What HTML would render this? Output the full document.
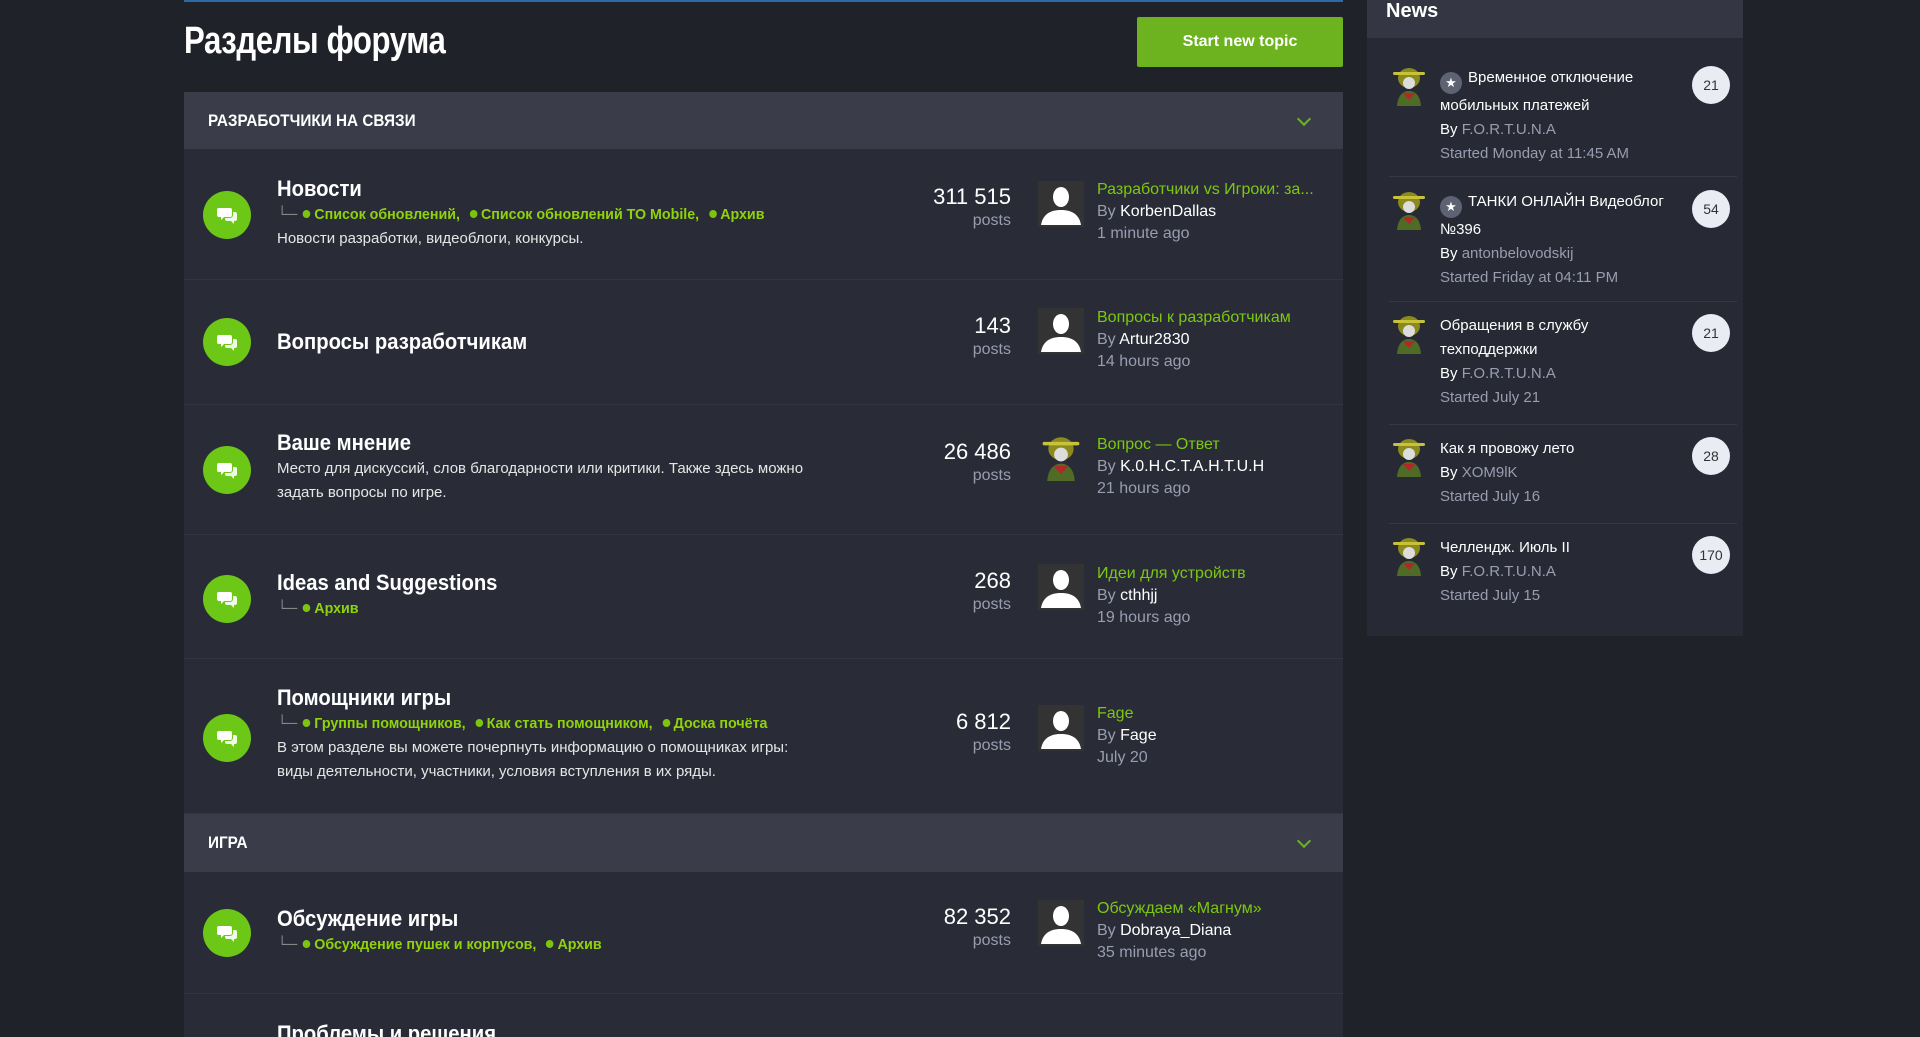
<!DOCTYPE html>
<html style="width:1920px;height:1037px;overflow:hidden"><head><meta charset="utf-8"><style>
*{box-sizing:border-box;margin:0;padding:0}
body{width:1920px;height:1037px;overflow:hidden;background:#1f2229;font-family:"Liberation Sans",sans-serif;color:#fff;position:relative}
.topline{position:absolute;left:184px;top:0;width:1159px;height:2px;background:#2b6aa6}
h1{position:absolute;left:184px;top:20px;font-size:38px;font-weight:bold;transform:scaleX(.82);transform-origin:left;letter-spacing:-.5px}
.btn{position:absolute;left:1137px;top:17px;width:206px;height:50px;background:#6cb31f;border-radius:2px;color:#fff;font-size:16px;display:flex;align-items:center;justify-content:center;font-weight:bold}
.main{position:absolute;left:184px;top:92px;width:1159px;height:945px;background:#292c37;overflow:hidden}
.sh{height:57px;background:#3a3d49;display:flex;align-items:center;padding-left:24px;font-weight:bold;font-size:17px;position:relative}
.sh span{display:inline-block;transform:scaleX(.9);transform-origin:left}
.sh i{position:absolute;right:34px;top:22px;width:10px;height:10px;border-right:2.5px solid #6cb31f;border-bottom:2.5px solid #6cb31f;transform:rotate(45deg)}
.row{position:relative;border-bottom:1px solid #33363f}
.ic{position:absolute;left:19px;width:48px;height:48px;border-radius:50%;background:#6cc716;display:flex;align-items:center;justify-content:center}
.info{position:absolute;left:93px;width:570px}
.t{font-size:22px;color:#fff;line-height:28px;font-weight:bold;transform:scaleX(.92);transform-origin:left;white-space:nowrap}
.sub{font-size:15px;color:#8fd30a;font-weight:bold;line-height:24px;transform:scaleX(.95);transform-origin:left;white-space:nowrap}
.sub b{display:inline-block;width:8px;height:8px;border-radius:50%;background:#7cc40f;margin:0 4px 1px 6px}
.sub em{color:#888;font-style:normal;font-weight:normal}
.d{font-size:15px;color:#e6e6e6;line-height:24px}
.st{position:absolute;right:332px;text-align:right}
.st .n{font-size:22px;line-height:26px}
.st .p{font-size:16px;color:#9a9cb0;line-height:22px}
.av{position:absolute;left:854px;width:46px;height:46px;background:#333}
.lp{position:absolute;left:913px;font-size:16px;line-height:22px;color:#9a9cb0;white-space:nowrap}
.lp a{color:#7cc80f;text-decoration:none}
.lp u{text-decoration:none;color:#fff}
.side{position:absolute;left:1367px;top:0;width:376px;height:636px;background:#272a34}
.side .hd{height:38px;background:#343743;padding-left:19px;font-weight:bold;font-size:20px;line-height:22px}
.it{position:absolute;left:0;width:376px}
.it .tx{position:absolute;left:73px;width:240px;font-size:15px;line-height:24px}
.it .tx .by{color:#fff}.it .tx .by span{color:#9a9cb0}
.it .tx .s{color:#9a9cb0}
.bd{position:absolute;left:325px;width:38px;height:38px;border-radius:50%;background:#e9ecf3;color:#333;font-size:14px;display:flex;align-items:center;justify-content:center}
.sep{position:absolute;left:22px;width:348px;height:1px;background:#363945}
.star{display:inline-block;width:22px;height:22px;border-radius:50%;background:#5d6372;vertical-align:-5px;margin-right:6px;text-align:center;font-size:13px;line-height:22px;color:#fff}
.tank{position:absolute;left:24px;width:36px;height:40px}
</style></head><body>
<svg width="0" height="0" style="position:absolute"><defs>
<g id="chat"><path d="M2 3h11a2 2 0 0 1 2 2v5a2 2 0 0 1-2 2H7l-3 3v-3H2a2 2 0 0 1-2-2V5a2 2 0 0 1 2-2z" fill="#fff"/><path d="M16 7h2a2 2 0 0 1 2 2v5a2 2 0 0 1-2 2h-1v3l-3-3h-4a2 2 0 0 1-2-2v-1h5a3 3 0 0 0 3-3z" fill="#fff" opacity=".9"/></g>
<g id="person"><rect width="46" height="46" fill="#333"/><ellipse cx="23" cy="16" rx="8" ry="10" fill="#fff"/><path d="M3 44 C5 32 14 29 23 29 C32 29 41 32 43 44Z" fill="#fff"/></g>
<g id="tk"><ellipse cx="18" cy="12" rx="11" ry="10" fill="#8a8a1e"/><rect x="2" y="6" width="32" height="3" rx="1.5" fill="#c8c23a"/><ellipse cx="18" cy="17" rx="6" ry="6" fill="#ddd"/><path d="M6 40 C7 28 13 25 18 25 C23 25 29 28 30 40Z" fill="#4f6b26"/><path d="M12 27 L18 34 L24 27Z" fill="#b3262a"/></g>
</defs></svg>
<div class="topline"></div>
<h1>Разделы форума</h1>
<div class="btn">Start new topic</div>
<div class="main">
<div class="sh"><span>РАЗРАБОТЧИКИ НА СВЯЗИ</span><i></i></div>
<div class="row" style="height:131px">
 <div class="ic" style="top:42px"><svg width="22" height="20" viewBox="0 0 20 20"><use href="#chat"/></svg></div>
 <div class="info" style="top:26px"><div class="t">Новости</div><div class="sub"><em>└─</em><b></b>Список обновлений, <b></b>Список обновлений ТО Mobile, <b></b>Архив</div><div class="d">Новости разработки, видеоблоги, конкурсы.</div></div>
 <div class="st" style="top:35px"><div class="n">311 515</div><div class="p">posts</div></div>
 <svg class="av" style="top:32px" viewBox="0 0 46 46"><use href="#person"/></svg>
 <div class="lp" style="top:30px"><a>Разработчики vs Игроки: за...</a><br>By <u>KorbenDallas</u><br>1 minute ago</div>
</div>
<div class="row" style="height:125px">
 <div class="ic" style="top:38px"><svg width="22" height="20" viewBox="0 0 20 20"><use href="#chat"/></svg></div>
 <div class="info" style="top:48px"><div class="t">Вопросы разработчикам</div></div>
 <div class="st" style="top:33px"><div class="n">143</div><div class="p">posts</div></div>
 <svg class="av" style="top:28px" viewBox="0 0 46 46"><use href="#person"/></svg>
 <div class="lp" style="top:27px"><a>Вопросы к разработчикам</a><br>By <u>Artur2830</u><br>14 hours ago</div>
</div>
<div class="row" style="height:130px">
 <div class="ic" style="top:41px"><svg width="22" height="20" viewBox="0 0 20 20"><use href="#chat"/></svg></div>
 <div class="info" style="top:24px"><div class="t">Ваше мнение</div><div class="d">Место для дискуссий, слов благодарности или критики. Также здесь можно задать вопросы по игре.</div></div>
 <div class="st" style="top:34px"><div class="n">26 486</div><div class="p">posts</div></div>
 <svg class="av" style="top:30px;background:none" viewBox="0 0 36 40"><use href="#tk"/></svg>
 <div class="lp" style="top:29px"><a>Вопрос — Ответ</a><br>By <u>K.0.H.C.T.A.H.T.U.H</u><br>21 hours ago</div>
</div>
<div class="row" style="height:124px">
 <div class="ic" style="top:40px"><svg width="22" height="20" viewBox="0 0 20 20"><use href="#chat"/></svg></div>
 <div class="info" style="top:34px"><div class="t">Ideas and Suggestions</div><div class="sub"><em>└─</em><b></b>Архив</div></div>
 <div class="st" style="top:33px"><div class="n">268</div><div class="p">posts</div></div>
 <svg class="av" style="top:29px" viewBox="0 0 46 46"><use href="#person"/></svg>
 <div class="lp" style="top:28px"><a>Идеи для устройств</a><br>By <u>cthhjj</u><br>19 hours ago</div>
</div>
<div class="row" style="height:155px">
 <div class="ic" style="top:55px"><svg width="22" height="20" viewBox="0 0 20 20"><use href="#chat"/></svg></div>
 <div class="info" style="top:25px"><div class="t">Помощники игры</div><div class="sub"><em>└─</em><b></b>Группы помощников, <b></b>Как стать помощником, <b></b>Доска почёта</div><div class="d" style="width:540px">В этом разделе вы можете почерпнуть информацию о помощниках игры: виды деятельности, участники, условия вступления в их ряды.</div></div>
 <div class="st" style="top:50px"><div class="n">6 812</div><div class="p">posts</div></div>
 <svg class="av" style="top:46px" viewBox="0 0 46 46"><use href="#person"/></svg>
 <div class="lp" style="top:44px"><a>Fage</a><br>By <u>Fage</u><br>July 20</div>
</div>
<div class="sh" style="height:58px"><span>ИГРА</span><i></i></div>
<div class="row" style="height:122px">
 <div class="ic" style="top:37px"><svg width="22" height="20" viewBox="0 0 20 20"><use href="#chat"/></svg></div>
 <div class="info" style="top:33px"><div class="t">Обсуждение игры</div><div class="sub"><em>└─</em><b></b>Обсуждение пушек и корпусов, <b></b>Архив</div></div>
 <div class="st" style="top:32px"><div class="n">82 352</div><div class="p">posts</div></div>
 <svg class="av" style="top:28px" viewBox="0 0 46 46"><use href="#person"/></svg>
 <div class="lp" style="top:26px"><a>Обсуждаем «Магнум»</a><br>By <u>Dobraya_Diana</u><br>35 minutes ago</div>
</div>
<div class="row" style="height:43px;border:none;overflow:hidden">
 <div class="info" style="top:26px"><div class="t">Проблемы и решения</div></div>
</div>
</div>
<div class="side">
<div class="hd">News</div>
<div class="it" style="top:66px"><svg class="tank" viewBox="0 0 36 40"><use href="#tk"/></svg><div class="tx"><span class="star">★</span>Временное отключение мобильных платежей<div class="by">By <span>F.O.R.T.U.N.A</span></div><div class="s">Started Monday at 11:45 AM</div></div><div class="bd" style="top:0">21</div></div>
<div class="sep" style="top:176px"></div>
<div class="it" style="top:190px"><svg class="tank" viewBox="0 0 36 40"><use href="#tk"/></svg><div class="tx"><span class="star">★</span>ТАНКИ ОНЛАЙН Видеоблог №396<div class="by">By <span>antonbelovodskij</span></div><div class="s">Started Friday at 04:11 PM</div></div><div class="bd" style="top:0">54</div></div>
<div class="sep" style="top:301px"></div>
<div class="it" style="top:314px"><svg class="tank" viewBox="0 0 36 40"><use href="#tk"/></svg><div class="tx">Обращения в службу техподдержки<div class="by">By <span>F.O.R.T.U.N.A</span></div><div class="s">Started July 21</div></div><div class="bd" style="top:0">21</div></div>
<div class="sep" style="top:424px"></div>
<div class="it" style="top:437px"><svg class="tank" viewBox="0 0 36 40"><use href="#tk"/></svg><div class="tx">Как я провожу лето<div class="by">By <span>XOM9lK</span></div><div class="s">Started July 16</div></div><div class="bd" style="top:0">28</div></div>
<div class="sep" style="top:523px"></div>
<div class="it" style="top:536px"><svg class="tank" viewBox="0 0 36 40"><use href="#tk"/></svg><div class="tx">Челлендж. Июль II<div class="by">By <span>F.O.R.T.U.N.A</span></div><div class="s">Started July 15</div></div><div class="bd" style="top:0">170</div></div>
</div>
</body></html>
